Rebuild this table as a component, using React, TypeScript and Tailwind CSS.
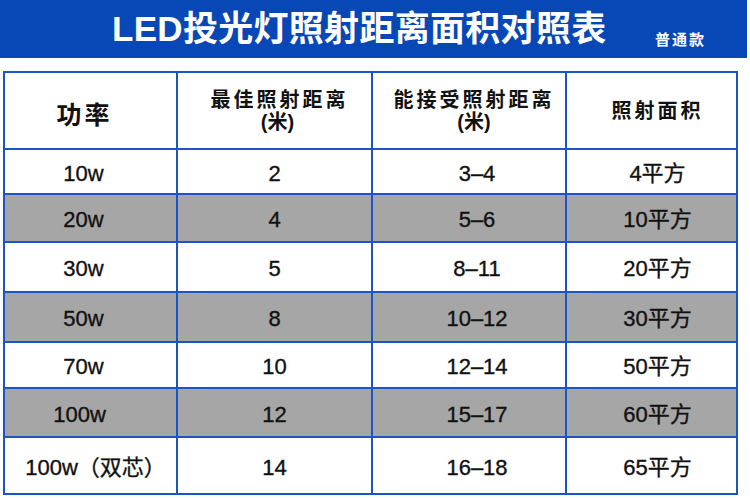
import React from 'react';

interface RowData {
  power: string;
  best: string;
  accept: string;
  area: string;
  height: string;
  gray: boolean;
  powerPad: string;
}

const rows: RowData[] = [
  { power: '10w', best: '2', accept: '3–4', area: '4平方', height: 'h-[43px]', gray: false, powerPad: 'pr-[14px]' },
  { power: '20w', best: '4', accept: '5–6', area: '10平方', height: 'h-[46px]', gray: true, powerPad: 'pr-[14px]' },
  { power: '30w', best: '5', accept: '8–11', area: '20平方', height: 'h-[48px]', gray: false, powerPad: 'pr-[14px]' },
  { power: '50w', best: '8', accept: '10–12', area: '30平方', height: 'h-[48px]', gray: true, powerPad: 'pr-[14px]' },
  { power: '70w', best: '10', accept: '12–14', area: '50平方', height: 'h-[44px]', gray: false, powerPad: 'pr-[14px]' },
  { power: '100w', best: '12', accept: '15–17', area: '60平方', height: 'h-[47px]', gray: true, powerPad: 'pr-[22px]' },
  { power: '100w（双芯）', best: '14', accept: '16–18', area: '65平方', height: 'h-[55px]', gray: false, powerPad: 'pl-[10px]' },
];

const font = { fontFamily: '"Liberation Sans", "Noto Sans CJK SC", sans-serif' };

export default function App() {
  return (
    <div className="w-[750px] h-[500px] bg-white text-[#111]" style={font}>
      {/* banner */}
      <div className="w-[747px] h-[58px] bg-[#0747b6] flex items-center relative">
        <h1 className="ml-[112px] text-[35px] font-bold text-white leading-none tracking-[0.3px] pb-[2px]">
          LED投光灯照射距离面积对照表
        </h1>
        <span className="absolute left-[655px] top-[32px] text-[15px] font-bold text-white leading-none tracking-[2px]">
          普通款
        </span>
      </div>

      {/* table */}
      <div className="mt-[13px] ml-[3px] w-[735px] bg-[#1b53c9] p-[2px] grid grid-cols-[171px_193px_192px_169px] gap-[2px]">
        <div className="h-[75px] bg-white flex items-center justify-center pr-[12px] pt-[10px]">
          <span className="text-[25px] font-bold tracking-[3px] leading-none">功率</span>
        </div>
        <div className="h-[75px] bg-white flex flex-col items-center justify-center pt-[1px] pl-[10px]">
          <span className="text-[20px] font-bold tracking-[3px] leading-[22px]">最佳照射距离</span>
          <span className="text-[20px] font-bold leading-[22px] pr-[4px]">(米)</span>
        </div>
        <div className="h-[75px] bg-white flex flex-col items-center justify-center pt-[1px] pl-[10px]">
          <span className="text-[20px] font-bold tracking-[3px] leading-[22px]">能接受照射距离</span>
          <span className="text-[20px] font-bold leading-[22px]">(米)</span>
        </div>
        <div className="h-[75px] bg-white flex items-start justify-center pt-[27px] pl-[12px]">
          <span className="text-[20px] font-bold tracking-[3px] leading-[22px]">照射面积</span>
        </div>

        {rows.map((r) => {
          const bg = r.gray ? 'bg-[#a6a6a6]' : 'bg-white';
          return (
            <React.Fragment key={r.power}>
              <div className={`${r.height} ${bg} flex items-center justify-center ${r.powerPad} pt-[4px]`}>
                <span className="text-[22px] leading-none [-webkit-text-stroke:0.35px_#111]">{r.power}</span>
              </div>
              <div className={`${r.height} ${bg} flex items-center justify-center pt-[4px]`}>
                <span className="text-[22px] leading-none [-webkit-text-stroke:0.35px_#111]">{r.best}</span>
              </div>
              <div className={`${r.height} ${bg} flex items-center justify-center pl-[16px] pt-[4px]`}>
                <span className="text-[22px] leading-none [-webkit-text-stroke:0.35px_#111]">{r.accept}</span>
              </div>
              <div className={`${r.height} ${bg} flex items-center justify-center pl-[12px] pt-[4px]`}>
                <span className="text-[22px] leading-none [-webkit-text-stroke:0.35px_#111]">{r.area}</span>
              </div>
            </React.Fragment>
          );
        })}
      </div>
    </div>
  );
}
